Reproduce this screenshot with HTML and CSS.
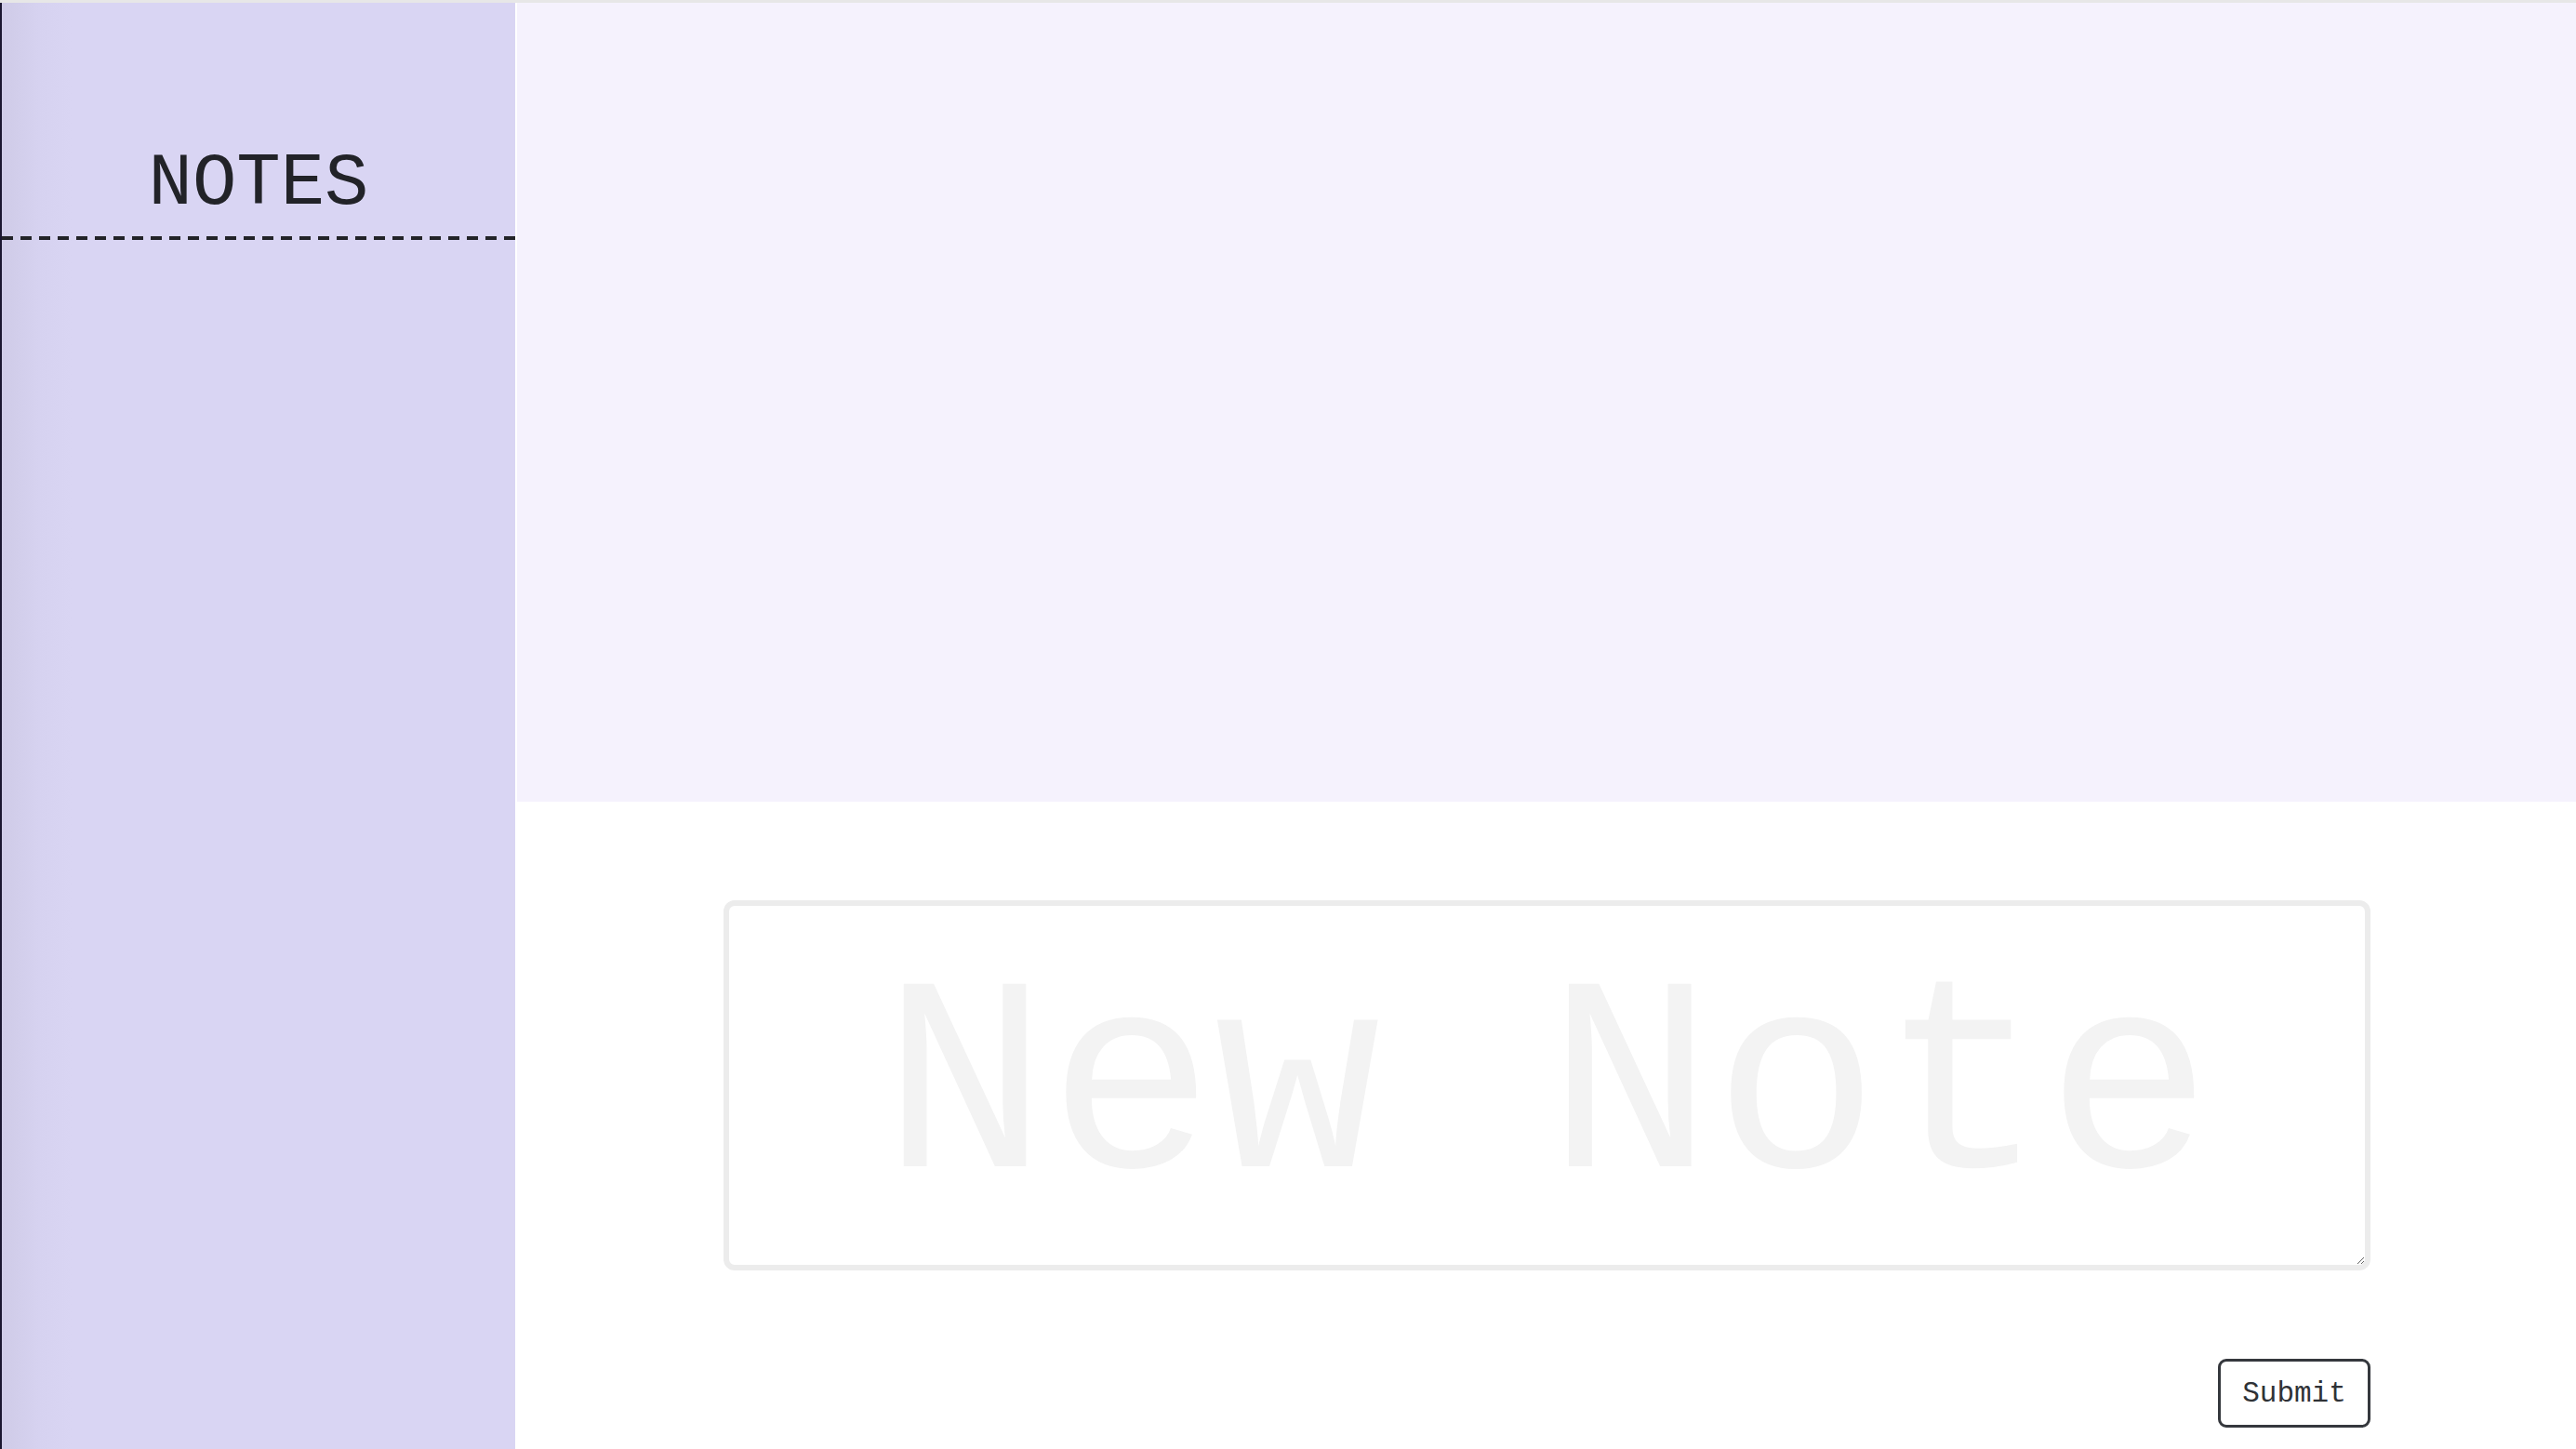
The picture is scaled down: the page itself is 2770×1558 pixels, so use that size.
FILE: index.html
```html
<!DOCTYPE html>
<html lang="en">
<head>
<meta charset="utf-8">
<title>Notes</title>
<link rel="stylesheet" href="styles.css">
</head>
<body>
<div class="topline"></div>
<div class="app">
  <aside class="sidebar">
    <h1 class="sidebar-title">NOTES</h1>
    <div class="sidebar-divider"></div>
  </aside>
  <main class="main">
    <section class="notes-area"></section>
    <form class="composer">
      <textarea class="note-input" placeholder="New Note"></textarea>
      <div class="actions">
        <button type="button" class="submit-btn">Submit</button>
      </div>
    </form>
  </main>
</div>
</body>
</html>
```
FILE: styles.css
```css
html, body {
  margin: 0;
  padding: 0;
  background: #ffffff;
  height: 1558px;
  overflow: hidden;
}

body {
  font-family: "Courier New", "Liberation Mono", monospace;
}

.topline {
  height: 3px;
  background: #e7e7e7;
}

.app {
  display: flex;
  height: 1555px;
}

.sidebar {
  width: 552px;
  flex: 0 0 552px;
  border-left: 2px solid #1b1630;
  background: linear-gradient(to right, #cfcbe7 0, #d6d2f0 40px, #d9d5f3 75px, #d9d5f3 100%);
}

.sidebar-title {
  margin: 0;
  padding: 156px 0 16px;
  font-size: 79px;
  line-height: 79px;
  font-weight: normal;
  text-align: center;
  color: #222328;
}

.sidebar-divider {
  height: 4px;
  background: repeating-linear-gradient(to right, #222328 0, #222328 12px, transparent 12px, transparent 20px);
}

.main {
  flex: 1;
  margin-left: 2px;
  display: flex;
  flex-direction: column;
}

.notes-area {
  height: 859px;
  background: #f5f2fd;
}

.composer {
  padding: 106px 221px 0 222px;
  display: flex;
  flex-direction: column;
}

.note-input {
  box-sizing: border-box;
  width: 100%;
  height: 398px;
  margin: 0;
  padding: 32px 20px 0;
  border: 6px solid #ececec;
  border-radius: 12px;
  background: #ffffff;
  font-family: "Courier New", "Liberation Mono", monospace;
  font-size: 298px;
  text-align: center;
  color: #333;
  outline: none;
}

.note-input::placeholder {
  color: #f3f3f3;
}

.actions {
  display: flex;
  justify-content: flex-end;
  margin-top: 95px;
}

.submit-btn {
  box-sizing: border-box;
  width: 164px;
  height: 74px;
  padding: 0;
  border: 3px solid #35383d;
  border-radius: 9px;
  background: #ffffff;
  color: #2f3236;
  font-family: "Courier New", "Liberation Mono", monospace;
  font-size: 31px;
}
```
